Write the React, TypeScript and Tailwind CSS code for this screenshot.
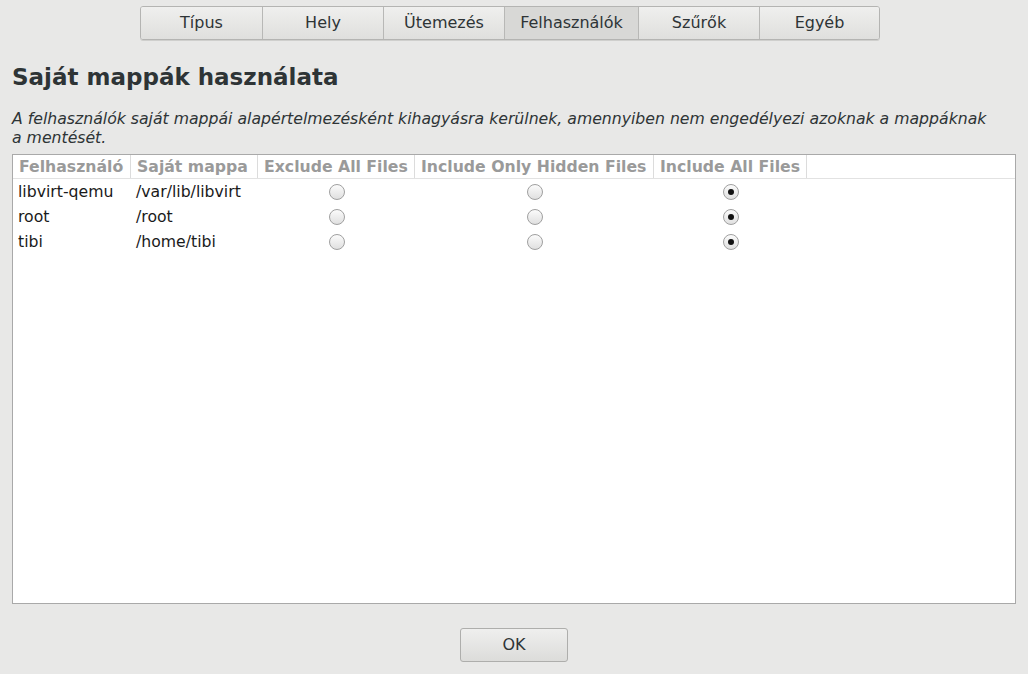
import React from 'react';

const tabs = [
  { label: 'Típus', w: 'w-[121px]' },
  { label: 'Hely', w: 'w-[121px]' },
  { label: 'Ütemezés', w: 'w-[121px]' },
  { label: 'Felhasználók', w: 'w-[134px]', active: true },
  { label: 'Szűrők', w: 'w-[121px]' },
  { label: 'Egyéb', w: 'w-[120px]' },
];

const cols = [
  { label: 'Felhasználó', w: 'w-[118px]' },
  { label: 'Saját mappa', w: 'w-[127px]' },
  { label: 'Exclude All Files', w: 'w-[157px]' },
  { label: 'Include Only Hidden Files', w: 'w-[239px]' },
  { label: 'Include All Files', w: 'w-[153px]' },
];

const rows = [
  { user: 'libvirt-qemu', home: '/var/lib/libvirt' },
  { user: 'root', home: '/root' },
  { user: 'tibi', home: '/home/tibi' },
];

function Radio({ checked }: { checked?: boolean }) {
  return (
    <span className="inline-flex w-[16px] h-[16px] rounded-full border border-[#a0a0a0] bg-gradient-to-b from-[#fbfbfb] to-[#e0e0e0] items-center justify-center">
      {checked && <span className="w-[6px] h-[6px] rounded-full bg-[#111]" />}
    </span>
  );
}

export default function App() {
  return (
    <div className="w-[1028px] h-[674px] bg-[#e8e8e7] flex flex-col font-['DejaVu_Sans',sans-serif] text-[#2e3436] overflow-hidden">
      <div className="flex pl-[140px] pt-[6px]">
        <div className="flex border border-[#b4b4b2] rounded-[3px] overflow-hidden shadow-[0_1px_0_#cfcfcd]">
          {tabs.map((t, i) => (
            <div
              key={t.label}
              className={`${t.w} h-[32px] flex items-center justify-center text-[16px] ${i > 0 ? 'border-l border-[#b8b8b6]' : ''} ${
                t.active ? 'bg-[#d8d8d6]' : 'bg-gradient-to-b from-[#efefee] to-[#dfdfdd]'
              }`}
            >
              {t.label}
            </div>
          ))}
        </div>
      </div>

      <h1 className="mt-[23px] ml-[12px] text-[23px] font-bold leading-[28px]">Saját mappák használata</h1>

      <p className="mt-[18px] ml-[12px] mr-[36px] text-[15.7px] italic leading-[19px]">
        A felhasználók saját mappái alapértelmezésként kihagyásra kerülnek, amennyiben nem engedélyezi azoknak a mappáknak a mentését.
      </p>

      <div className="mt-[7px] mx-[12px] h-[450px] bg-white border border-[#a9a9a9]">
        <div className="flex h-[24px] border-b border-[#e2e2e2]">
          {cols.map((c) => (
            <div
              key={c.label}
              className={`${c.w} shrink-0 border-r border-[#dcdcdc] flex items-center px-[6px] text-[15.7px] font-bold text-[#9a9a9a] whitespace-nowrap`}
            >
              {c.label}
            </div>
          ))}
        </div>
        {rows.map((r) => (
          <div key={r.user} className="flex h-[25px] items-center text-[15.7px] text-[#1a1a1a]">
            <div className="w-[118px] pl-[5px]">{r.user}</div>
            <div className="w-[127px] pl-[5px]">{r.home}</div>
            <div className="w-[157px] flex justify-center"><Radio /></div>
            <div className="w-[239px] flex justify-center"><Radio /></div>
            <div className="w-[153px] flex justify-center"><Radio checked /></div>
          </div>
        ))}
      </div>

      <div className="flex justify-center mt-[24px]">
        <button className="w-[108px] h-[34px] rounded-[3px] border border-[#aeaeac] bg-gradient-to-b from-[#efefee] to-[#dcdcda] text-[16px] text-[#2e3436]">
          OK
        </button>
      </div>
    </div>
  );
}
